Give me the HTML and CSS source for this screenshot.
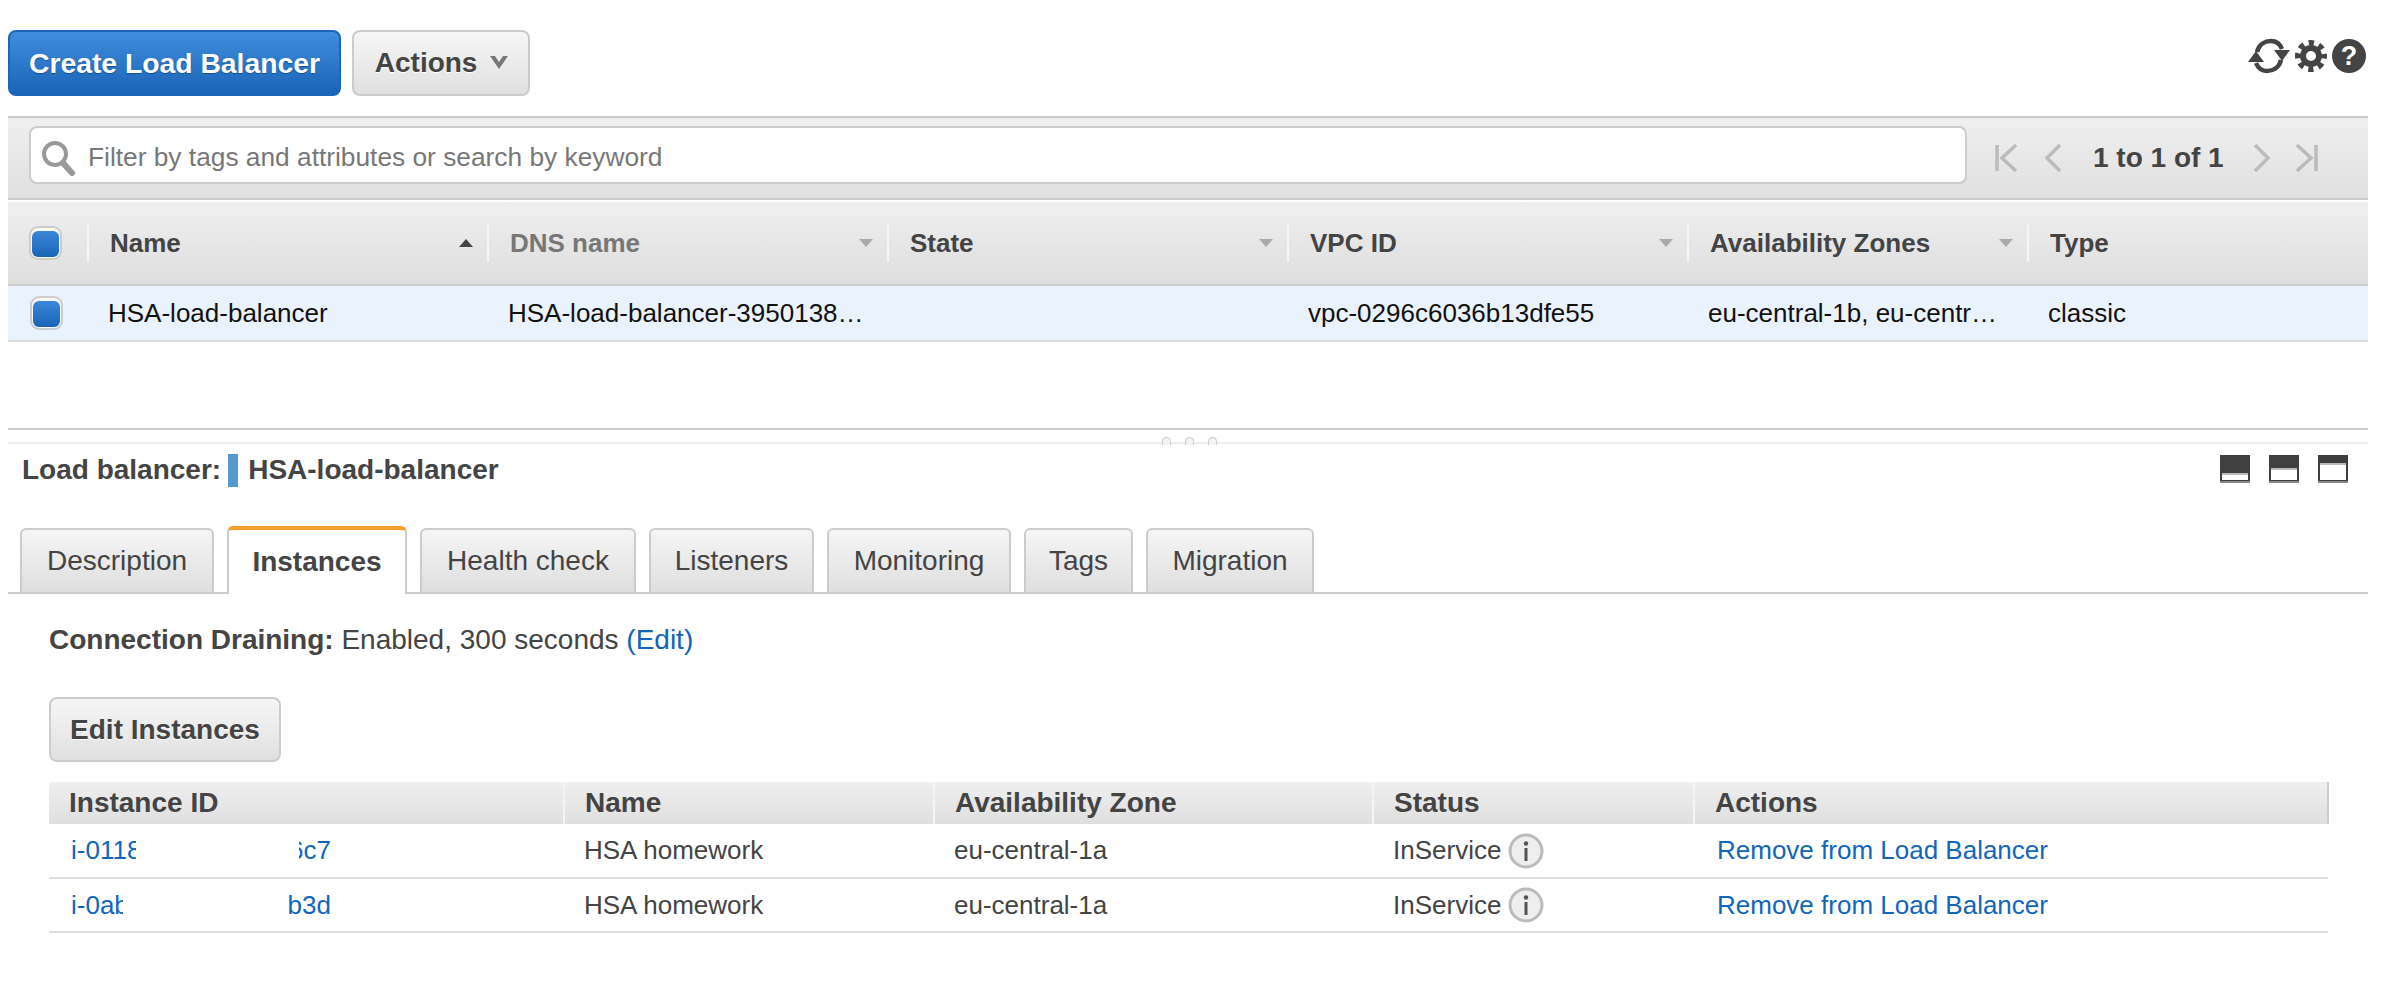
FILE: index.html
```html
<!DOCTYPE html>
<html lang="en">
<head>
  <meta charset="UTF-8" />
  <title>Load Balancers</title>
  <link rel="stylesheet" href="styles.css">
</head>
<body>
  <div class="topbar">
    <div class="topbar-left">
      <button class="btn btn-primary">Create Load Balancer</button>
      <button class="btn btn-actions">Actions
        <svg class="caret" width="20" height="14" viewBox="0 0 20 14"><path d="M1 1h5l4 6 4-6h5l-9 13z" fill="#777"/></svg>
      </button>
    </div>
    <div class="topbar-icons">
      <svg width="42" height="38" viewBox="0 0 42 38" fill="none">
        <path d="M9 15C11 7 17 4 23 4c5 0 9 3 11 8" stroke="#444" stroke-width="4.500"/>
        <path d="M26 13h16l-8 11z" fill="#444"/>
        <path d="M33 23c-2 8-8 11-14 11-5 0-9-3-11-8" stroke="#444" stroke-width="4.500"/>
        <path d="M0 25l8-11 8 11z" fill="#444"/>
      </svg>
      <svg width="32" height="34" viewBox="0 0 32 34" fill="none">
        <circle cx="16" cy="17" r="13" stroke="#444" stroke-width="6" stroke-dasharray="5.200 5" stroke-dashoffset="2.600"/>
        <circle cx="16" cy="17" r="8" stroke="#444" stroke-width="6"/>
      </svg>
      <span class="help-icon">?</span>
    </div>
  </div>

  <div class="filterbar">
    <div class="search">
      <svg width="36" height="36" viewBox="0 0 36 36" fill="none">
        <circle cx="14" cy="14" r="11" stroke="#999" stroke-width="4"/>
        <path d="M22 23l9 10" stroke="#999" stroke-width="6" stroke-linecap="round"/>
      </svg>
      <span>Filter by tags and attributes or search by keyword</span>
    </div>
    <div class="pager">
      <svg class="pg-first" width="22" height="28" viewBox="0 0 22 28" fill="none" stroke="#bbb" stroke-width="3.500"><path d="M2 1v26M21 1L7 14l14 13"/></svg>
      <svg class="pg-prev" width="16" height="28" viewBox="0 0 16 28" fill="none" stroke="#bbb" stroke-width="3.500"><path d="M15 1L2 14l13 13"/></svg>
      <span class="pg-text">1 to 1 of 1</span>
      <svg class="pg-next" width="16" height="28" viewBox="0 0 16 28" fill="none" stroke="#bbb" stroke-width="3.500"><path d="M1 1l13 13L1 27"/></svg>
      <svg class="pg-last" width="22" height="28" viewBox="0 0 22 28" fill="none" stroke="#bbb" stroke-width="3.500"><path d="M20 1v26M1 1l14 13L1 27"/></svg>
    </div>
  </div>

  <div class="grid grid-head">
    <div class="cell cell-check"><span class="check"></span></div>
    <div class="cell sep"><span>Name</span><i class="sort sort-up"></i></div>
    <div class="cell sep muted"><span>DNS name</span><i class="sort"></i></div>
    <div class="cell sep"><span>State</span><i class="sort"></i></div>
    <div class="cell sep"><span>VPC ID</span><i class="sort"></i></div>
    <div class="cell sep"><span>Availability Zones</span><i class="sort"></i></div>
    <div class="cell sep"><span>Type</span></div>
  </div>
  <div class="grid grid-row">
    <div class="cell cell-check"><span class="check"></span></div>
    <div class="cell"><span class="clip">HSA-load-balancer</span></div>
    <div class="cell"><span class="clip">HSA-load-balancer-3950138…</span></div>
    <div class="cell"></div>
    <div class="cell"><span class="clip">vpc-0296c6036b13dfe55</span></div>
    <div class="cell"><span class="clip">eu-central-1b, eu-centr…</span></div>
    <div class="cell"><span class="clip">classic</span></div>
  </div>

  <div class="splitter">
    <div class="grip"><i></i><i></i><i></i></div>
  </div>

  <div class="detail-head">
    <div class="lb-title">
      <b>Load balancer:</b>
      <span class="swatch"></span>
      <b>HSA-load-balancer</b>
    </div>
    <div class="pane-icons">
      <span class="pane pane-s"></span>
      <span class="pane pane-m"></span>
      <span class="pane pane-l"></span>
    </div>
  </div>

  <div class="tabs">
    <div class="tab t1">Description</div>
    <div class="tab tab-on t2">Instances</div>
    <div class="tab t3">Health check</div>
    <div class="tab t4">Listeners</div>
    <div class="tab t5">Monitoring</div>
    <div class="tab t6">Tags</div>
    <div class="tab t7">Migration</div>
  </div>

  <div class="panel">
    <p class="draining"><b>Connection Draining:</b> Enabled, 300 seconds <a href="#">(Edit)</a></p>
    <button class="btn btn-edit">Edit Instances</button>

    <table class="instances">
      <thead>
        <tr>
          <th class="c-id">Instance ID</th>
          <th class="c-name">Name</th>
          <th class="c-az">Availability Zone</th>
          <th class="c-st">Status</th>
          <th class="c-act">Actions</th>
        </tr>
      </thead>
      <tbody>
        <tr>
          <td><a href="#" class="iid"><span class="iid-a w1">i-0118</span><span class="iid-b w3">6c7</span></a></td>
          <td>HSA homework</td>
          <td>eu-central-1a</td>
          <td><span class="status">InService<svg width="36" height="36" viewBox="0 0 36 36"><circle cx="18" cy="18" r="16" fill="#eee" stroke="#bbb" stroke-width="3"/><circle cx="18" cy="10.500" r="2.200" fill="#555"/><path d="M18 15v13" stroke="#555" stroke-width="3"/></svg></span></td>
          <td class="c-act"><a href="#">Remove from Load Balancer</a></td>
        </tr>
        <tr>
          <td><a href="#" class="iid"><span class="iid-a w2">i-0ab</span><span class="iid-b">b3d</span></a></td>
          <td>HSA homework</td>
          <td>eu-central-1a</td>
          <td><span class="status">InService<svg width="36" height="36" viewBox="0 0 36 36"><circle cx="18" cy="18" r="16" fill="#eee" stroke="#bbb" stroke-width="3"/><circle cx="18" cy="10.500" r="2.200" fill="#555"/><path d="M18 15v13" stroke="#555" stroke-width="3"/></svg></span></td>
          <td class="c-act"><a href="#">Remove from Load Balancer</a></td>
        </tr>
      </tbody>
    </table>
  </div>
</body>
</html>
```

FILE: styles.css
```css
* {
  box-sizing: border-box;
}
body {
  margin: 0;
  padding: 0 20px 0 8px;
  background: #fff;
  color: #444;
  font-family: "Liberation Sans", Arial, sans-serif;
  font-size: 26px;
}
a {
  color: #1166bb;
  text-decoration: none;
}

/* buttons */
.btn {
  height: 66px;
  border-radius: 8px;
  font-family: inherit;
  font-size: 28px;
  font-weight: bold;
  padding: 0;
}
.btn-primary {
  width: 333px;
  color: #fff;
  background: linear-gradient(#3f8ddd, #1a64b6);
  border: 2px solid #1a66b8;
  font-size: 28.300px;
  text-shadow: 0 1px 1px #15508f;
}
.btn-actions {
  width: 178px;
  padding-left: 2px;
  color: #444;
  background: linear-gradient(#f6f6f6, #e0e0e0);
  border: 2px solid #ccc;
  text-shadow: 0 1px 0 #fff;
}
.caret {
  margin-left: 4px;
  vertical-align: 3px;
}
.btn-edit {
  display: block;
  width: 232px;
  height: 65px;
  color: #444;
  background: linear-gradient(#f6f6f6, #e0e0e0);
  border: 2px solid #ccc;
  text-shadow: 0 1px 0 #fff;
}

/* top bar */
.topbar {
  display: flex;
  justify-content: space-between;
  padding-top: 30px;
  height: 116px;
}
.topbar-left {
  display: flex;
  gap: 11px;
  align-items: flex-start;
}
.topbar-icons {
  display: flex;
  align-items: center;
  height: 42px;
  margin-top: 5px;
  gap: 5px;
  padding-right: 2px;
}
.help-icon {
  width: 34px;
  height: 34px;
  border-radius: 50%;
  background: #444;
  color: #fff;
  font-weight: bold;
  font-size: 27px;
  line-height: 34px;
  text-align: center;
}

/* filter */
.filterbar {
  height: 84px;
  display: flex;
  align-items: flex-start;
  padding: 8px 0 0 21px;
  background: linear-gradient(#efefef, #e0e0e0);
  border-top: 2px solid #ccc;
  border-bottom: 2px solid #ccc;
}
.search {
  width: 1938px;
  height: 58px;
  display: flex;
  align-items: center;
  gap: 11px;
  padding: 5px 0 0 10px;
  background: #fff;
  border: 2px solid #ccc;
  border-radius: 8px;
  color: #777;
  font-size: 26.300px;
}
.pager {
  display: flex;
  align-items: center;
  height: 60px;
  padding-left: 28px;
  margin-top: 2px;
}
.pg-prev {
  margin-left: 28px;
}
.pg-text {
  margin: 0 30px 0 32px;
  font-size: 28px;
  font-weight: bold;
  white-space: nowrap;
}
.pg-last {
  margin-left: 26px;
}

/* load balancer list */
.grid {
  display: grid;
  grid-template-columns: 79px 400px 400px 400px 400px 340px 340px;
  margin-top: 2px;
}
.grid-head {
  height: 84px;
  background: linear-gradient(#efefef, #dedede);
  border-bottom: 2px solid #ccc;
  font-weight: bold;
  padding-top: 22px;
  align-items: start;
}
.grid-head .cell {
  height: 38px;
  display: flex;
  align-items: center;
  justify-content: space-between;
  padding: 0 14px 0 21px;
}
.grid-head .sep {
  border-left: 2px solid #f6f6f6;
}
.grid-head .cell-check {
  padding: 0 0 0 21px;
  justify-content: flex-start;
}
.muted {
  color: #777;
}
.sort {
  width: 0;
  height: 0;
  border-left: 7px solid transparent;
  border-right: 7px solid transparent;
  border-top: 8px solid #aaa;
}
.sort-up {
  border-top: 0;
  border-bottom: 8px solid #444;
}
.grid-row {
  height: 56px;
  margin-top: 0;
  background: #eaf2fd;
  border-bottom: 2px solid #ddd;
  color: #111;
  align-items: center;
}
.grid-row .cell {
  padding-left: 21px;
}
.grid-row .cell-check {
  display: flex;
  padding: 0 0 0 22px;
}
.clip {
  white-space: nowrap;
}
.check {
  width: 33px;
  height: 34px;
  padding: 3px 1px 1px;
  border: 2px solid #ccc;
  border-radius: 9px;
  background: #f8f8f8;
  display: block;
}
.check::after {
  content: "";
  display: block;
  width: 100%;
  height: 100%;
  border-radius: 6px;
  background: linear-gradient(#3a88da, #1a64b6);
}

/* splitter */
.splitter {
  height: 16px;
  margin-top: 86px;
  border-top: 2px solid #ccc;
  border-bottom: 2px solid #eee;
  position: relative;
}
.grip {
  position: absolute;
  left: 1154px;
  top: 7px;
  display: flex;
  gap: 14px;
}
.grip i {
  display: block;
  width: 9px;
  height: 8px;
  border: 1px solid #ccc;
  border-bottom: 0;
  border-radius: 5px 5px 0 0;
  background: #f4f4f4;
}

/* detail */
.detail-head {
  display: flex;
  justify-content: space-between;
  align-items: center;
  height: 52px;
  padding: 0 20px 0 14px;
}
.lb-title {
  display: flex;
  align-items: center;
  font-size: 28px;
}
.swatch {
  width: 10px;
  height: 33px;
  margin: 0 10px 0 7px;
  background: #5599d0;
}
.pane-icons {
  display: flex;
  gap: 19px;
  margin-top: -2px;
}
.pane {
  width: 30px;
  height: 28px;
  padding: 2px 2px 1px;
  background: #3f3f3f;
  border-bottom: 2px solid #888;
  display: flex;
  align-items: flex-end;
}
.pane::after {
  content: "";
  display: block;
  width: 100%;
  background: #fff;
  border-top: 2px solid #bbb;
}
.pane-s::after {
  height: 5px;
}
.pane-m::after {
  height: 10px;
}
.pane-l::after {
  height: 15px;
}

/* tabs */
.tabs {
  display: flex;
  align-items: flex-end;
  height: 78px;
  padding: 0 0 0 12px;
  border-bottom: 2px solid #ccc;
  font-size: 28px;
  margin-top: 20px;
}
.tab {
  height: 64px;
  margin-right: 13px;
  padding-top: 15px;
  text-align: center;
  background: linear-gradient(#f5f5f5, #dfdfdf);
  border: 2px solid #ccc;
  border-bottom: 0;
  border-radius: 6px 6px 0 0;
  white-space: nowrap;
}
.tab-on {
  height: 68px;
  padding-top: 16px;
  margin-bottom: -2px;
  background: #fff;
  border-top: 4px solid #f99d2b;
  border-bottom: 0;
  font-weight: bold;
}
.t1 { width: 194px; }
.t2 { width: 180px; }
.t3 { width: 216px; }
.t4 { width: 165px; }
.t5 { width: 184px; }
.t6 { width: 109px; }
.t7 { width: 168px; margin-right: 0; }

/* instances panel */
.panel {
  padding-left: 41px;
}
.draining {
  margin: 30px 0 41px;
  font-size: 28px;
  line-height: 32px;
}
.instances {
  width: 2280px;
  margin-top: 20px;
  border-collapse: collapse;
  table-layout: fixed;
}
.instances th {
  height: 42px;
  padding: 0 0 0 20px;
  text-align: left;
  font-size: 28px;
  background: linear-gradient(#efefef, #dfdfdf);
  border-left: 2px solid #f4f4f4;
}
.instances th:first-child {
  border-left: 0;
}
.instances th:last-child {
  border-right: 2px solid #ccc;
}
.c-id { width: 515px; }
.c-name { width: 370px; }
.c-az { width: 439px; }
.c-st { width: 321px; }
.instances td {
  height: 54px;
  padding: 0 0 0 20px;
  border-bottom: 2px solid #ddd;
  white-space: nowrap;
}
.instances td.c-act {
  padding-left: 23px;
}
.iid {
  display: flex;
  width: 260px;
  justify-content: space-between;
  margin-left: 2px;
}
.iid-a {
  overflow: hidden;
}
.w1 { width: 65px; }
.w2 { width: 52px; }
.iid-b {
  display: flex;
  justify-content: flex-end;
  overflow: hidden;
}
.w3 { width: 32px; }
.status {
  display: flex;
  align-items: center;
  gap: 7px;
}
```
